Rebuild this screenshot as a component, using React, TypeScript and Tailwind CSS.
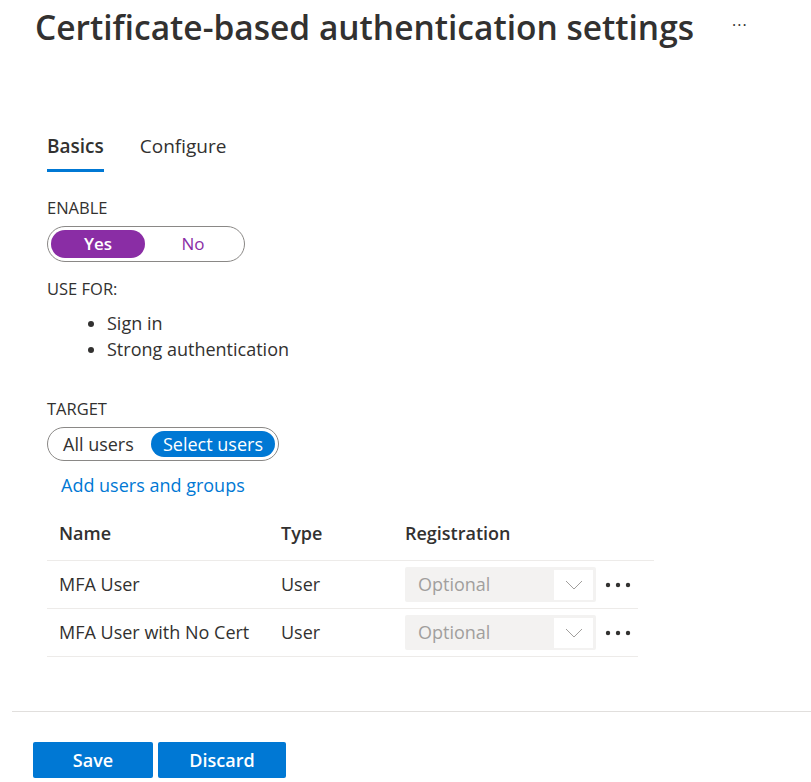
// ─── Data ─────────────────────────────────────────────────────────────────────

const users = [
  { name: "MFA User", type: "User", registration: "Optional" },
  { name: "MFA User with No Cert", type: "User", registration: "Optional" },
];

const font = { fontFamily: '"Open Sans", "Noto Sans", sans-serif' };

// ─── Icons ────────────────────────────────────────────────────────────────────

function Chevron() {
  return (
    <svg width="18" height="10" viewBox="0 0 18 10" fill="none">
      <polyline points="1,1 9,9 17,1" stroke="#a19f9d" strokeWidth="1" />
    </svg>
  );
}

function MoreDots() {
  return (
    <svg width="26" height="6" viewBox="0 0 26 6">
      <circle cx="3" cy="3" r="2.2" fill="#323130" />
      <circle cx="13" cy="3" r="2.2" fill="#323130" />
      <circle cx="23" cy="3" r="2.2" fill="#323130" />
    </svg>
  );
}

// ─── Component ────────────────────────────────────────────────────────────────

export default function App() {
  return (
    <div className="flex h-[782px] w-[811px] flex-col bg-white text-[#323130]" style={font}>
      {/* Header */}
      <div className="flex items-start pl-[35px] pt-[3px]">
        <h1 className="whitespace-nowrap text-[33.5px] font-semibold leading-[48px] text-[#323130]">
          Certificate-based authentication settings
        </h1>
        <span className="ml-[38px] mt-[10px] text-[16px] tracking-[1px] text-[#323130]">···</span>
      </div>

      <div className="flex-1 pl-[47px] pt-[81px]">
        {/* Tabs */}
        <div className="flex gap-[36px] text-[19px] leading-[28px]">
          <div className="flex flex-col">
            <span className="font-semibold">Basics</span>
            <span className="mt-[9px] h-[3px] w-full bg-[#0078d4]" />
          </div>
          <span>Configure</span>
        </div>

        {/* Enable */}
        <div className="mt-[25px] text-[16.5px] leading-[22px]">ENABLE</div>
        <div className="mt-[7px] flex h-[36px] w-[198px] items-center rounded-full border border-[#8a8886] px-[3px] text-[17px]">
          <span className="flex h-[28px] w-[94px] items-center justify-center rounded-full bg-[#8a2da5] font-semibold text-white">
            Yes
          </span>
          <span className="flex-1 text-center text-[#8a2da5]">No</span>
        </div>

        {/* Use for */}
        <div className="mt-[16px] text-[16.5px] leading-[22px]">USE FOR:</div>
        <ul className="mt-[10px] list-disc pl-[60px] text-[18px] leading-[26px]">
          <li>Sign in</li>
          <li>Strong authentication</li>
        </ul>

        {/* Target */}
        <div className="mt-[36px] text-[16.5px] leading-[22px]">TARGET</div>
        <div className="mt-[7px] flex h-[34px] w-[232px] items-center rounded-full border border-[#8a8886] pl-[15px] pr-[3px] text-[18px]">
          <span>All users</span>
          <span className="ml-auto flex h-[26px] items-center rounded-full bg-[#0078d4] px-[12px] text-white">
            Select users
          </span>
        </div>
        <div className="mt-[11px] pl-[14px] text-[18px] leading-[26px] text-[#0078d4]">Add users and groups</div>

        {/* Table */}
        <div className="mt-[8px] w-[607px] text-[18px]">
          <div className="flex h-[55px] items-center border-b border-[#edebe9] pl-[12px] font-semibold">
            <span className="w-[222px] shrink-0">Name</span>
            <span className="w-[124px] shrink-0">Type</span>
            <span>Registration</span>
          </div>
          {users.map((u) => (
            <div key={u.name} className="flex h-[48px] w-[591px] items-center border-b border-[#edebe9] pl-[12px]">
              <span className="w-[222px] shrink-0">{u.name}</span>
              <span className="w-[124px] shrink-0">{u.type}</span>
              <div className="flex h-[35px] w-[191px] shrink-0 items-center rounded-[2px] bg-[#f3f2f1] pl-[13px] pr-[3px]">
                <span className="flex-1 text-[#a19f9d]">{u.registration}</span>
                <span className="flex h-[30px] w-[39px] items-center justify-center bg-white">
                  <Chevron />
                </span>
              </div>
              <span className="ml-[9px] flex shrink-0 items-center">
                <MoreDots />
              </span>
            </div>
          ))}
        </div>
      </div>

      {/* Footer */}
      <div className="ml-[12px] border-t border-[#e1dfdd] pb-[4px] pl-[21px] pt-[30px]">
        <div className="flex gap-[5px]">
          <button className="h-[36px] w-[120px] rounded-[2px] bg-[#0078d4] text-[18px] font-semibold text-white">
            Save
          </button>
          <button className="h-[36px] w-[128px] rounded-[2px] bg-[#0078d4] text-[18px] font-semibold text-white">
            Discard
          </button>
        </div>
      </div>
    </div>
  );
}
